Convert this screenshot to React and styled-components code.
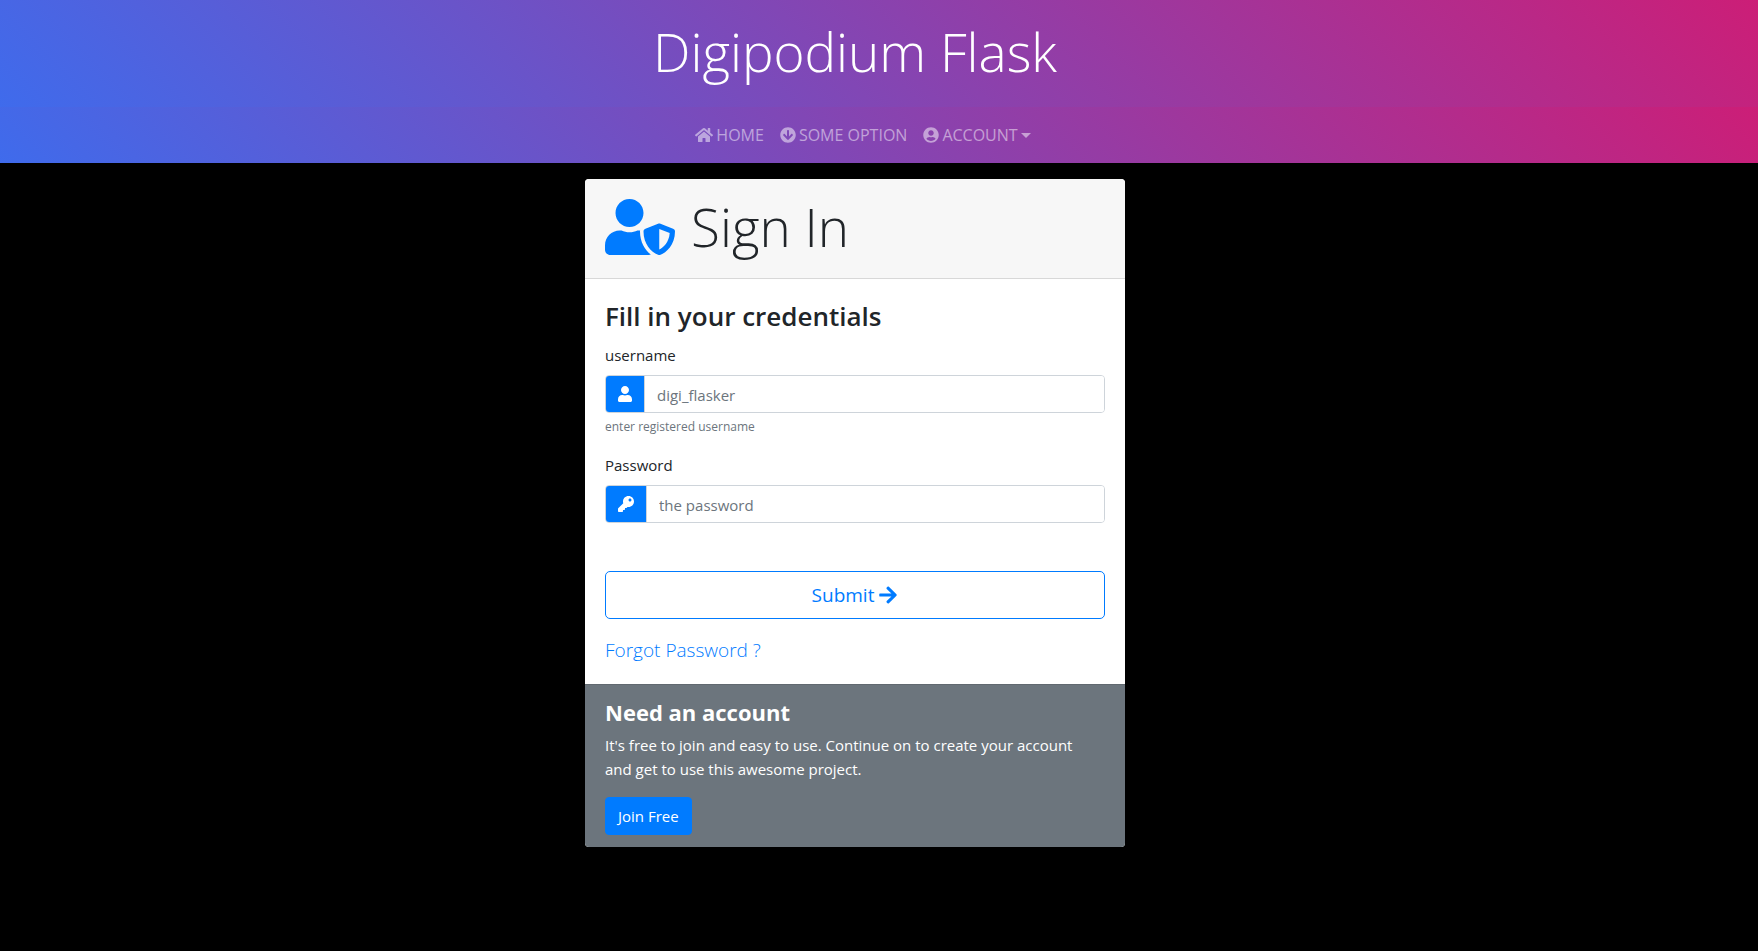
import React from "react";
import styled, { createGlobalStyle } from "styled-components";
import {
  FaHome,
  FaArrowCircleDown,
  FaUserCircle,
  FaUserShield,
  FaUser,
  FaKey,
  FaArrowRight,
} from "react-icons/fa";

const GlobalStyle = createGlobalStyle`
  *, *::before, *::after { box-sizing: border-box; }
  body {
    margin: 0;
    background: #000;
    color: #212529;
    font-family: "Open Sans", "Noto Sans", sans-serif;
    font-size: 15px;
    line-height: 24px;
  }
  h1, h2, h3, h4, p, ul { margin: 0; padding: 0; }
  button, input { font: inherit; }
  a { text-decoration: none; }
`;

const gradient = "linear-gradient(45deg, #3f6bec, #cc1e77)";

const Banner = styled.header`
  padding: 18px 48px 22px 0;
  background: ${gradient};
  color: #fff;
  text-align: center;
`;

const BannerTitle = styled.h1`
  font-size: 53px;
  font-weight: 300;
  line-height: 67px;
`;

const Nav = styled.nav`
  padding: 8px 32px 8px 0;
  background: ${gradient};
`;

const NavList = styled.ul`
  display: flex;
  justify-content: center;
  list-style: none;
`;

const NavLink = styled.a`
  display: flex;
  align-items: center;
  gap: 3px;
  padding: 8px;
  color: rgba(255, 255, 255, 0.5);
  font-size: 16px;
`;

const Caret = styled.span`
  border-top: 5px solid;
  border-left: 5px solid transparent;
  border-right: 5px solid transparent;
`;

const Main = styled.main`
  display: flex;
  justify-content: center;
  padding: 16px 48px 16px 0;
`;

const Card = styled.section`
  width: 100%;
  max-width: 540px;
  border-radius: 4px;
  background: #fff;
  overflow: hidden;
`;

const CardHeader = styled.div`
  display: flex;
  align-items: center;
  gap: 16px;
  padding: 14px 20px 18px;
  border-bottom: 1px solid #d8d8d8;
  background: #f7f7f7;
`;

const CardTitle = styled.h2`
  font-size: 53px;
  font-weight: 300;
  line-height: 67px;
`;

const ShieldIcon = styled(FaUserShield)`
  width: 70px;
  height: 56px;
  color: #007bff;
`;

const CardBody = styled.div`
  padding: 20px;
`;

const FormTitle = styled.h3`
  margin-bottom: 10px;
  font-size: 26px;
  font-weight: 600;
  line-height: 34px;
`;

const Field = styled.div`
  margin-bottom: 16px;
`;

const Label = styled.label`
  display: block;
  margin-bottom: 8px;
`;

const InputGroup = styled.div`
  display: flex;
  height: 38px;
  border: 1px solid #ced4da;
  border-radius: 4px;
  overflow: hidden;
`;

const Addon = styled.span`
  display: flex;
  align-items: center;
  padding: 0 12px;
  border-right: 1px solid #ced4da;
  background: #007bff;
  color: #fff;
`;

const UserIcon = styled(FaUser)`
  width: 14px;
  height: 16px;
`;

const TextInput = styled.input`
  flex: 1;
  min-width: 0;
  padding: 2px 12px 0;
  border: 0;
  background: #fff;
  color: #495057;
  outline: none;
  &::placeholder { color: #6c757d; opacity: 1; }
`;

const Hint = styled.small`
  display: block;
  margin-top: 4px;
  color: #6c757d;
  font-size: 12px;
  line-height: 20px;
`;

const SubmitButton = styled.button`
  display: flex;
  align-items: center;
  justify-content: center;
  gap: 4px;
  width: 100%;
  height: 48px;
  margin: 48px 0 18px;
  border: 1px solid #007bff;
  border-radius: 5px;
  background: transparent;
  color: #007bff;
  font-size: 19px;
  cursor: pointer;
`;

const ForgotLink = styled.a`
  display: block;
  color: #007bff;
  font-size: 19px;
  font-weight: 300;
  line-height: 27px;
`;

const CardFooter = styled.div`
  padding: 12px 20px;
  border-top: 1px solid #616970;
  background: #6c757d;
  color: #fff;
`;

const FooterTitle = styled.h4`
  margin-bottom: 6px;
  font-size: 22px;
  font-weight: 700;
  line-height: 30px;
`;

const FooterText = styled.p`
  margin-bottom: 16px;
  padding-right: 20px;
`;

const JoinButton = styled.button`
  height: 38px;
  padding: 0 12px;
  border: 1px solid #007bff;
  border-radius: 4px;
  background: #007bff;
  color: #fff;
  cursor: pointer;
`;

export default function App() {
  return (
    <>
      <GlobalStyle />
      <Banner>
        <BannerTitle>Digipodium Flask</BannerTitle>
      </Banner>
      <Nav>
        <NavList>
          <li><NavLink href="#home"><FaHome size={18} />HOME</NavLink></li>
          <li><NavLink href="#option"><FaArrowCircleDown size={16} />SOME OPTION</NavLink></li>
          <li><NavLink href="#account"><FaUserCircle size={16} />ACCOUNT<Caret /></NavLink></li>
        </NavList>
      </Nav>
      <Main>
        <Card>
          <CardHeader>
            <ShieldIcon />
            <CardTitle>Sign In</CardTitle>
          </CardHeader>
          <CardBody>
            <form onSubmit={(e) => e.preventDefault()}>
              <FormTitle>Fill in your credentials</FormTitle>
              <Field>
                <Label htmlFor="username">username</Label>
                <InputGroup>
                  <Addon><UserIcon /></Addon>
                  <TextInput id="username" type="text" placeholder="digi_flasker" />
                </InputGroup>
                <Hint>enter registered username</Hint>
              </Field>
              <Field>
                <Label htmlFor="password">Password</Label>
                <InputGroup>
                  <Addon><FaKey size={16} /></Addon>
                  <TextInput id="password" type="password" placeholder="the password" />
                </InputGroup>
              </Field>
              <SubmitButton type="submit">Submit<FaArrowRight size={20} /></SubmitButton>
            </form>
            <ForgotLink href="#forgot">Forgot Password ?</ForgotLink>
          </CardBody>
          <CardFooter>
            <FooterTitle>Need an account</FooterTitle>
            <FooterText>
              It's free to join and easy to use. Continue on to create your account and get to use this awesome project.
            </FooterText>
            <JoinButton type="button">Join Free</JoinButton>
          </CardFooter>
        </Card>
      </Main>
    </>
  );
}
